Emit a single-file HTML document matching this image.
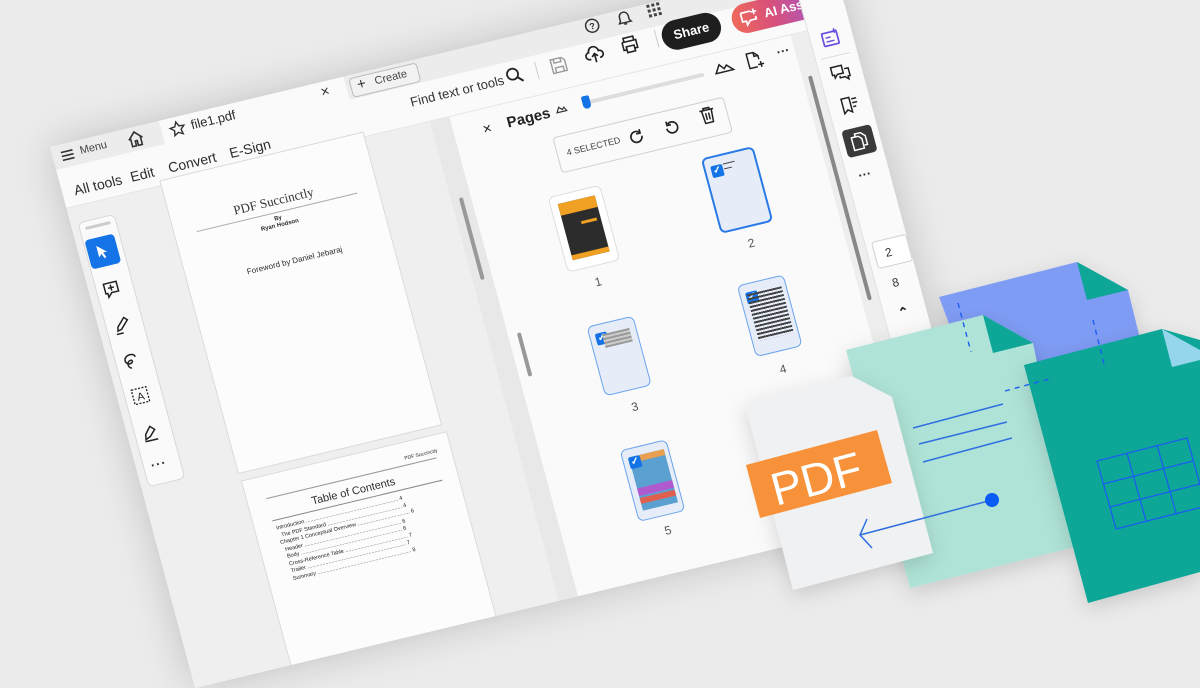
<!DOCTYPE html>
<html><head><meta charset="utf-8"><style>
*{box-sizing:border-box;margin:0;padding:0}
body{width:1200px;height:630px;overflow:hidden;background:#ebebeb;font-family:"Liberation Sans",sans-serif;position:relative}
#win{position:absolute;left:0;top:0;width:805px;height:560px;background:#fafafa;transform-origin:0 0;transform:matrix(0.972,-0.233,0.259,0.966,50,147);box-shadow:0 0 40px rgba(0,0,0,.18);overflow:hidden}
.a{position:absolute}
.t{position:absolute;white-space:nowrap;color:#2c2c2c}
svg.i{position:absolute;overflow:visible}
.th{position:absolute;width:54px;height:78px;border-radius:6px}
.sel{background:#e6edf8;border:1.5px solid #6aa3ee}
.chk{position:absolute;left:5px;top:8px;width:12px;height:12px;background:#1473e6;border-radius:2px;color:#fff;font-size:10px;line-height:12px;text-align:center;font-weight:bold}
.ln{position:absolute;height:2px;background:#444}
.lbl{position:absolute;font-size:12px;color:#555;width:20px;text-align:center}
</style></head><body>
<div id="win">
 <!-- row1 -->
 <div class="a" style="left:0;top:0;width:805px;height:24px;background:#ececec"></div>
 <div class="a" style="left:112px;top:0;width:190px;height:24px;background:#fafafa"></div>
 <svg class="i" style="left:8px;top:5px" width="14" height="14"><path d="M1 3h12M1 7h12M1 11h12" stroke="#333" stroke-width="1.6"/></svg>
 <div class="t" style="left:28px;top:5px;font-size:11px;color:#444">Menu</div>
 <svg class="i" style="left:76px;top:3px" width="18" height="18"><path d="M2 9 9 2l7 7M4 7v9h4v-5h2v5h4V7" fill="none" stroke="#333" stroke-width="1.6"/></svg>
 <svg class="i" style="left:120px;top:4px" width="16" height="16"><path d="M8 1l2.1 4.5 4.9.5-3.7 3.3 1 4.8L8 11.7 3.7 14.1l1-4.8L1 6l4.9-.5z" fill="none" stroke="#333" stroke-width="1.4"/></svg>
 <div class="t" style="left:142px;top:4px;font-size:13px">file1.pdf</div>
 <div class="t" style="left:276px;top:2px;font-size:15px;color:#333">×</div>
 <div class="a" style="left:306px;top:3px;width:70px;height:20px;border:1px solid #bbb;border-radius:4px;background:#f2f2f2"></div>
 <div class="t" style="left:313px;top:3px;font-size:15px;color:#333">+</div>
 <div class="t" style="left:331px;top:6px;font-size:11px;color:#444">Create</div>
 <svg class="i" style="left:548px;top:1px" width="15" height="15"><circle cx="7.5" cy="7.5" r="6.5" fill="none" stroke="#333" stroke-width="1.5"/><text x="7.5" y="11" font-size="9" text-anchor="middle" font-family="Liberation Sans" font-weight="bold" fill="#333">?</text></svg>
 <svg class="i" style="left:581px;top:0" width="15" height="16"><path d="M3 11V7a4.5 4.5 0 0 1 9 0v4l1.5 2h-12zM6 14.5h3" fill="none" stroke="#333" stroke-width="1.5"/></svg>
 <svg class="i" style="left:613px;top:1px" width="14" height="14"><g fill="#444"><rect x="0" y="0" width="3" height="3"/><rect x="5" y="0" width="3" height="3"/><rect x="10" y="0" width="3" height="3"/><rect x="0" y="5" width="3" height="3"/><rect x="5" y="5" width="3" height="3"/><rect x="10" y="5" width="3" height="3"/><rect x="0" y="10" width="3" height="3"/><rect x="5" y="10" width="3" height="3"/><rect x="10" y="10" width="3" height="3"/></g></svg>
 <!-- row2 -->
 <div class="a" style="left:0;top:24px;width:805px;height:40px;background:#fafafa;border-bottom:1px solid #e4e4e4"></div>
 <div class="t" style="left:12px;top:40px;font-size:14px">All tools</div>
 <div class="t" style="left:70px;top:40px;font-size:14px">Edit</div>
 <div class="t" style="left:109px;top:40px;font-size:14px">Convert</div>
 <div class="t" style="left:172px;top:40px;font-size:14px">E-Sign</div>
 <div class="t" style="left:360px;top:33px;font-size:13px;color:#333">Find text or tools</div>
 <svg class="i" style="left:459px;top:30px" width="17" height="17"><circle cx="7" cy="7" r="5.5" fill="none" stroke="#222" stroke-width="1.8"/><path d="M11 11l5 5" stroke="#222" stroke-width="2"/></svg>
 <div class="a" style="left:490px;top:30px;width:1px;height:18px;background:#ccc"></div>
 <svg class="i" style="left:505px;top:31px" width="16" height="16"><path d="M1 1h11l3 3v11H1zM4 1v4h7V1M4 15v-5h8v5" fill="none" stroke="#999" stroke-width="1.4"/></svg>
 <svg class="i" style="left:541px;top:28px" width="19" height="18"><path d="M5 13H4a3.5 3.5 0 0 1 0-7 5 5 0 0 1 10 0 3.5 3.5 0 0 1 1 7h-1M9.5 17V8M6.5 11l3-3 3 3" fill="none" stroke="#222" stroke-width="1.7"/></svg>
 <svg class="i" style="left:578px;top:27px" width="18" height="17"><path d="M4 5V1h10v4M2 5h14v8h-3M5 13H2V5M5 10h8v6H5z" fill="none" stroke="#222" stroke-width="1.6"/></svg>
 <div class="a" style="left:614px;top:27px;width:1px;height:18px;background:#ccc"></div>
 <div class="a" style="left:620px;top:22px;width:60px;height:30px;background:#1e1e1e;border-radius:15px;color:#fff;font-size:13px;font-weight:bold;text-align:center;line-height:30px">Share</div>
 <div class="a" style="left:692px;top:22px;width:115px;height:30px;background:linear-gradient(90deg,#ef6a5a,#d8507a 35%,#8a5cf0);border-radius:15px;color:#fff;font-size:13px;font-weight:bold;line-height:30px;padding-left:33px">AI Assistant</div>
 <svg class="i" style="left:700px;top:28px" width="20" height="18"><path d="M2 3h10M2 3v9h4v4l4-4h6V9" fill="none" stroke="#fff" stroke-width="1.7"/><path d="M15 1v6M12 4h6" stroke="#fff" stroke-width="1.6"/></svg>
 <!-- doc area -->
 <div class="a" style="left:0;top:64px;width:394px;height:500px;background:#efefef"></div>
 <div class="a" style="left:7px;top:80px;width:38px;height:274px;background:#fafafa;border:1px solid #d8d8d8;border-radius:6px"></div>
 <div class="a" style="left:13px;top:86px;width:26px;height:3px;background:#ccc;border-radius:2px"></div>
 <div class="a" style="left:9px;top:99px;width:30px;height:30px;background:#1473e6;border-radius:4px"></div>
 <svg class="i" style="left:16px;top:105px" width="16" height="18"><path d="M3 2v12l3-3 2 5 2-1-2-5h4z" fill="#fff"/></svg>
 <svg class="i" style="left:14px;top:144px" width="18" height="18"><path d="M2 2h13v10H8l-4 4v-4H2z M8.5 4v6M5.5 7h6" fill="none" stroke="#222" stroke-width="1.5"/></svg>
 <svg class="i" style="left:14px;top:181px" width="18" height="18"><path d="M4 14l1-4 8-8 3 3-8 8z M2 17h7" fill="none" stroke="#222" stroke-width="1.5"/></svg>
 <svg class="i" style="left:14px;top:218px" width="18" height="18"><path d="M14 6c0-3-4-4-7-3S2 7 4 10s7 1 6-1-5 0-5 3 2 4 3 4" fill="none" stroke="#222" stroke-width="1.5"/></svg>
 <svg class="i" style="left:14px;top:254px" width="18" height="18"><rect x="1.5" y="1.5" width="15" height="15" fill="none" stroke="#222" stroke-width="1.3" stroke-dasharray="2 1.5"/><text x="9" y="13.5" font-size="11" text-anchor="middle" font-family="Liberation Sans" fill="#222">A</text></svg>
 <svg class="i" style="left:14px;top:292px" width="18" height="18"><path d="M3 15l1-5 6-7 4 4-6 6zM2 17h13" fill="none" stroke="#222" stroke-width="1.5"/></svg>
 <div class="t" style="left:15px;top:326px;font-size:13px;font-weight:bold;letter-spacing:1px">···</div>
 <!-- page1 -->
 <div class="a" style="left:97px;top:58px;width:210px;height:304px;background:#fcfcfc;border:1px solid #dadada"></div>
 <div class="t" style="left:97px;width:210px;text-align:center;top:97px;font-family:'Liberation Serif',serif;font-size:13px;color:#333">PDF Succinctly</div>
 <div class="a" style="left:120px;top:116px;width:165px;height:1px;background:#aaa"></div>
 <div class="t" style="left:97px;width:210px;text-align:center;top:120px;font-size:6px;font-weight:bold;line-height:7px">By<br>Ryan Hodson</div>
 <div class="t" style="left:97px;width:220px;text-align:center;top:163px;font-size:8px">Foreword by Daniel Jebaraj</div>
 <!-- page2 -->
 <div class="a" style="left:98px;top:369px;width:212px;height:200px;background:#fcfcfc;border:1px solid #dadada"></div>
 <div class="t" style="left:262px;top:383px;font-size:5px">PDF Succinctly</div>
 <div class="a" style="left:118px;top:392px;width:175px;height:1px;background:#999"></div>
 <div class="t" style="left:98px;width:212px;text-align:center;top:400px;font-size:11px">Table of Contents</div>
 <div class="a" style="left:118px;top:415px;width:175px;height:1px;background:#888"></div>
 <div class="t" style="left:120px;top:421px;font-size:5.5px;line-height:7.5px;color:#222">Introduction .............................................................. 4<br>&nbsp;&nbsp;The PDF Standard .................................................. 4<br>Chapter 1 Conceptual Overview ................................... 6<br>&nbsp;&nbsp;Header ................................................................. 6<br>&nbsp;&nbsp;Body .................................................................... 6<br>&nbsp;&nbsp;Cross-Reference Table .......................................... 7<br>&nbsp;&nbsp;Trailer .................................................................. 7<br>&nbsp;&nbsp;Summary ............................................................... 8</div>
 <div class="a" style="left:374px;top:64px;width:20px;height:500px;background:#e8e8e8"></div>
 <div class="a" style="left:382px;top:145px;width:4px;height:85px;background:#999;border-radius:2px"></div>
 <!-- pages panel -->
 <div class="a" style="left:394px;top:64px;width:351px;height:500px;background:#fafafa"></div>
 <div class="a" style="left:403px;top:290px;width:4px;height:45px;background:#999;border-radius:2px"></div>
 <div class="t" style="left:423px;top:76px;font-size:15px;color:#222">×</div>
 <div class="t" style="left:448px;top:75px;font-size:15px;font-weight:bold;color:#222">Pages</div>
 <svg class="i" style="left:498px;top:78px" width="12" height="8"><path d="M1 7l3-5 3 3 2-2 2 4z" fill="none" stroke="#333" stroke-width="1.2"/></svg>
 <div class="a" style="left:528px;top:80px;width:123px;height:4px;background:#ddd;border-radius:2px"></div>
 <div class="a" style="left:526px;top:75px;width:8px;height:13px;background:#1473e6;border-radius:2px 2px 4px 4px"></div>
 <svg class="i" style="left:662px;top:73px" width="20" height="12"><path d="M1 11l5-8 4 5 3-3 6 6z" fill="none" stroke="#222" stroke-width="1.5"/></svg>
 <svg class="i" style="left:695px;top:70px" width="18" height="19"><path d="M10 17H2V2h7l4 4v4M9 2v4h4M14 12v6M11 15h6" fill="none" stroke="#222" stroke-width="1.5"/></svg>
 <div class="t" style="left:727px;top:70px;font-size:13px;font-weight:bold">···</div>
 <div class="a" style="left:488px;top:108px;width:176px;height:37px;border:1px solid #cfcfcf;border-radius:4px;background:#fafafa"></div>
 <div class="t" style="left:498px;top:121px;font-size:9px;color:#444">4 SELECTED</div>
 <svg class="i" style="left:562px;top:119px" width="16" height="16"><path d="M13 8a5.5 5.5 0 1 1-2-4.3M12 1v4H8" fill="none" stroke="#222" stroke-width="1.7"/></svg>
 <svg class="i" style="left:598px;top:118px" width="16" height="16"><path d="M3 8a5.5 5.5 0 1 0 2-4.3M4 1v4h4" fill="none" stroke="#222" stroke-width="1.7"/></svg>
 <svg class="i" style="left:636px;top:114px" width="16" height="17"><path d="M1 3h14M5 3V1h6v2M3 3l1 13h8l1-13M6.5 6v7M9.5 6v7" fill="none" stroke="#222" stroke-width="1.5"/></svg>
 <!-- thumbs -->
 <div class="th" style="left:468px;top:165px;border:1px solid #ddd;background:#fff"><div class="a" style="left:7px;top:8px;width:38px;height:58px;background:#2c2c2c;border-top:12px solid #f0a022;border-bottom:5px solid #f0a022"></div><div class="a" style="left:25px;top:30px;width:16px;height:3px;background:#f0a022"></div></div>
 <div class="lbl" style="left:485px;top:252px">1</div>
 <div class="th" style="left:626px;top:163px;background:#e6edf8;border:2.5px solid #2a7ae6"><div class="chk">✓</div><div class="ln" style="left:18px;top:8px;width:12px;height:1px"></div><div class="ln" style="left:18px;top:13px;width:8px;height:1px"></div></div>
 <div class="lbl" style="left:643px;top:250px">2</div>
 <div class="th sel" style="left:472px;top:300px;width:48px;height:72px"><div class="chk">✓</div><div class="a" style="left:12px;top:10px;width:28px;height:14px;background:repeating-linear-gradient(#999 0 2px,#ccc 2px 4px)"></div></div>
 <div class="lbl" style="left:488px;top:382px">3</div>
 <div class="th sel" style="left:628px;top:295px;width:48px;height:74px"><div class="chk">✓</div><div class="a" style="left:6px;top:10px;width:36px;height:48px;background:repeating-linear-gradient(#444 0 2px,transparent 2px 4px)"></div></div>
 <div class="lbl" style="left:641px;top:380px">4</div>
 <div class="th sel" style="left:472px;top:428px;width:48px;height:74px"><div class="a" style="left:6px;top:8px;width:36px;height:55px;background:#5aa0d0"></div><div class="a" style="left:16px;top:8px;width:26px;height:6px;background:#e8a050"></div><div class="a" style="left:6px;top:40px;width:36px;height:8px;background:#b05ad0"></div><div class="a" style="left:6px;top:50px;width:36px;height:6px;background:#e06050"></div><div class="chk">✓</div></div>
 <div class="lbl" style="left:488px;top:510px">5</div>
 <!-- scroll track -->
 <div class="a" style="left:745px;top:64px;width:17px;height:500px;background:#eee"></div>
 <div class="a" style="left:751px;top:108px;width:4px;height:232px;background:#888;border-radius:2px"></div>
 <!-- right sidebar -->
 <div class="a" style="left:762px;top:24px;width:43px;height:540px;background:#fafafa;border-left:1px solid #e0e0e0"></div>
 <svg class="i" style="left:774px;top:67px" width="18" height="17"><rect x="1" y="3" width="15" height="13" rx="1" fill="none" stroke="#6a4ce0" stroke-width="1.7"/><path d="M4 8h5M4 12h8" stroke="#6a4ce0" stroke-width="1.5"/><path d="M14 0v5M11.5 2.5h5" stroke="#6a4ce0" stroke-width="1.4"/></svg>
 <div class="a" style="left:768px;top:94px;width:30px;height:1px;background:#ddd"></div>
 <svg class="i" style="left:774px;top:104px" width="19" height="17"><path d="M1 1h11v8H6l-3 3V9H1zM14 5h4v8h-2v3l-3-3H8v-2" fill="none" stroke="#222" stroke-width="1.5"/></svg>
 <svg class="i" style="left:775px;top:137px" width="18" height="18"><path d="M2 1h8v15l-4-3-4 3zM12 3h5M12 7h5M12 11h3" fill="none" stroke="#222" stroke-width="1.5"/></svg>
 <div class="a" style="left:769px;top:169px;width:30px;height:28px;background:#3a3a3a;border-radius:4px"></div>
 <svg class="i" style="left:776px;top:174px" width="16" height="18"><path d="M5 4V1h6l4 4v9h-3M1 4h7l3 3v10H1z" fill="none" stroke="#fff" stroke-width="1.5"/></svg>
 <div class="t" style="left:774px;top:209px;font-size:13px;font-weight:bold">···</div>
 <div class="a" style="left:769px;top:284px;width:36px;height:28px;border:1px solid #d0d0d0;border-radius:3px;background:#fff;font-size:12px;line-height:26px;padding-left:10px;color:#333">2</div>
 <div class="t" style="left:779px;top:322px;font-size:12px;color:#333">8</div>
 <div class="t" style="left:777px;top:352px;font-size:13px;font-weight:bold;color:#222">⌃</div>
</div>

<svg width="1200" height="630" style="position:absolute;left:0;top:0">
 <defs><filter id="sh" x="-20%" y="-20%" width="140%" height="140%"><feDropShadow dx="0" dy="6" stdDeviation="10" flood-color="#000" flood-opacity=".15"/></filter></defs>
 <g filter="url(#sh)">
  <polygon points="939,297 1077,262 1128,290 1160,420 1000,460" fill="#7f9cf5"/>
  <polygon points="1077,262 1087,300 1128,290" fill="#07a697"/>
 </g>
 <g filter="url(#sh)">
  <polygon points="846,350 983,315 1033,343 1075,547 910,588" fill="#afe3d7"/>
  <polygon points="983,315 993,353 1033,343" fill="#07a697"/>
  <polygon points="852,376 858,406 892,397" fill="#96d6ec"/>
 </g>
 <g filter="url(#sh)">
  <polygon points="1024,365 1162,329 1200,340 1200,572 1088,603" fill="#07a697"/>
  <polygon points="1162,329 1172,367 1200,360 1200,350" fill="#96d6ec"/>
 </g>
 <g stroke="#1a5df0" stroke-width="1.4" fill="none" stroke-dasharray="5 5">
  <path d="M958 303 971 352"/><path d="M1093 320 1105 368"/><path d="M1005 391 1053 378"/>
 </g>
 <g stroke="#1a5df0" stroke-width="1.3" fill="none">
  <path d="M1097 461 1187 438 1206 506 1116 529Z"/>
  <path d="M1127 453 1146 521M1157 445 1176 513M1103 484 1193 461M1110 507 1200 484"/>
 </g>
 <g filter="url(#sh)">
  <polygon points="745,403 852,376 892,397 933,553 793,590" fill="#f0f1f3"/>
 </g>
 <g stroke="#2f6fe0" stroke-width="1.5" fill="none">
  <path d="M913 428 1003 404M919 444 1007 422M923 462 1012 438"/>
  <path d="M992 500 860 535M867 519 860 535 872 548"/>
 </g>
 <circle cx="992" cy="500" r="7" fill="#0a5cf5"/>
 <polygon points="746,465 877,430 892,483 760,518" fill="#f7923a"/>
 <text x="0" y="0" transform="translate(776,506) rotate(-15)" font-family="Liberation Sans" font-size="46" fill="#fff" font-weight="300">PDF</text>
</svg>
</body></html>
